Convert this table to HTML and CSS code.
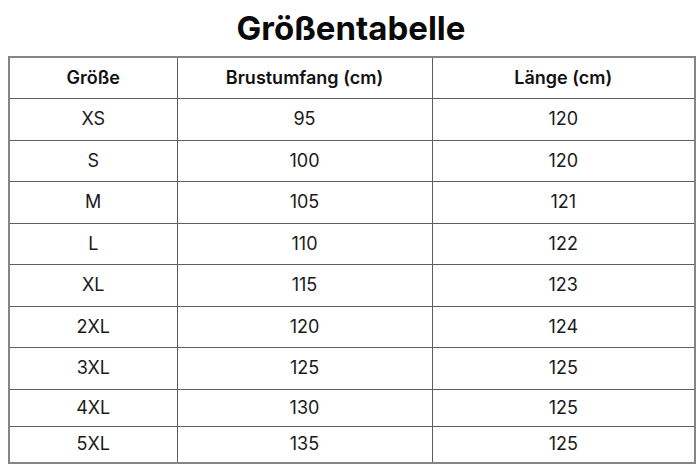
FILE: index.html
```html
<!DOCTYPE html>
<html lang="de">
<head>
<meta charset="utf-8">
<title>Größentabelle</title>
<link rel="stylesheet" href="styles.css">
</head>
<body>
<div class="page">
  <h1 class="title">Größentabelle</h1>
  <table class="sizes">
    <colgroup>
      <col class="c1"><col class="c2"><col class="c3">
    </colgroup>
    <thead>
      <tr><th>Größe</th><th>Brustumfang (cm)</th><th>Länge (cm)</th></tr>
    </thead>
    <tbody>
      <tr><td>XS</td><td>95</td><td>120</td></tr>
      <tr><td>S</td><td>100</td><td>120</td></tr>
      <tr><td>M</td><td>105</td><td>121</td></tr>
      <tr><td>L</td><td>110</td><td>122</td></tr>
      <tr><td>XL</td><td>115</td><td>123</td></tr>
      <tr><td>2XL</td><td>120</td><td>124</td></tr>
      <tr><td>3XL</td><td>125</td><td>125</td></tr>
      <tr class="short"><td>4XL</td><td>130</td><td>125</td></tr>
      <tr class="short"><td>5XL</td><td>135</td><td>125</td></tr>
    </tbody>
  </table>
</div>
</body>
</html>
```
FILE: styles.css
```css
html, body {
  margin: 0;
  padding: 0;
  background: #ffffff;
}
body {
  font-family: Inter, "Noto Sans", "Liberation Sans", sans-serif;
  color: #111111;
}
.page {
  padding: 0 6px 0 8px;
}
.title {
  margin: 0;
  height: 56px;
  line-height: 56px;
  text-align: center;
  font-size: 33px;
  font-weight: 700;
  color: #0a0a0a;
  letter-spacing: 0;
}
.sizes {
  width: 686px;
  border-collapse: collapse;
  table-layout: fixed;
  border: 2px solid #858585;
}
.c1 { width: 168px; }
.c2 { width: 255px; }
.c3 { width: 263px; }
.sizes tr {
  height: 41.5px;
}
.sizes tr.short {
  height: 37px;
}
.sizes th, .sizes td {
  border: 1px solid #5e5e5e;
  text-align: center;
  padding: 0;
  box-sizing: border-box;
  font-size: 18px;
  line-height: 20px;
}
.sizes th {
  font-weight: 600;
  color: #111;
}
.sizes td {
  font-weight: 400;
  color: #1a1a1a;
}
```
